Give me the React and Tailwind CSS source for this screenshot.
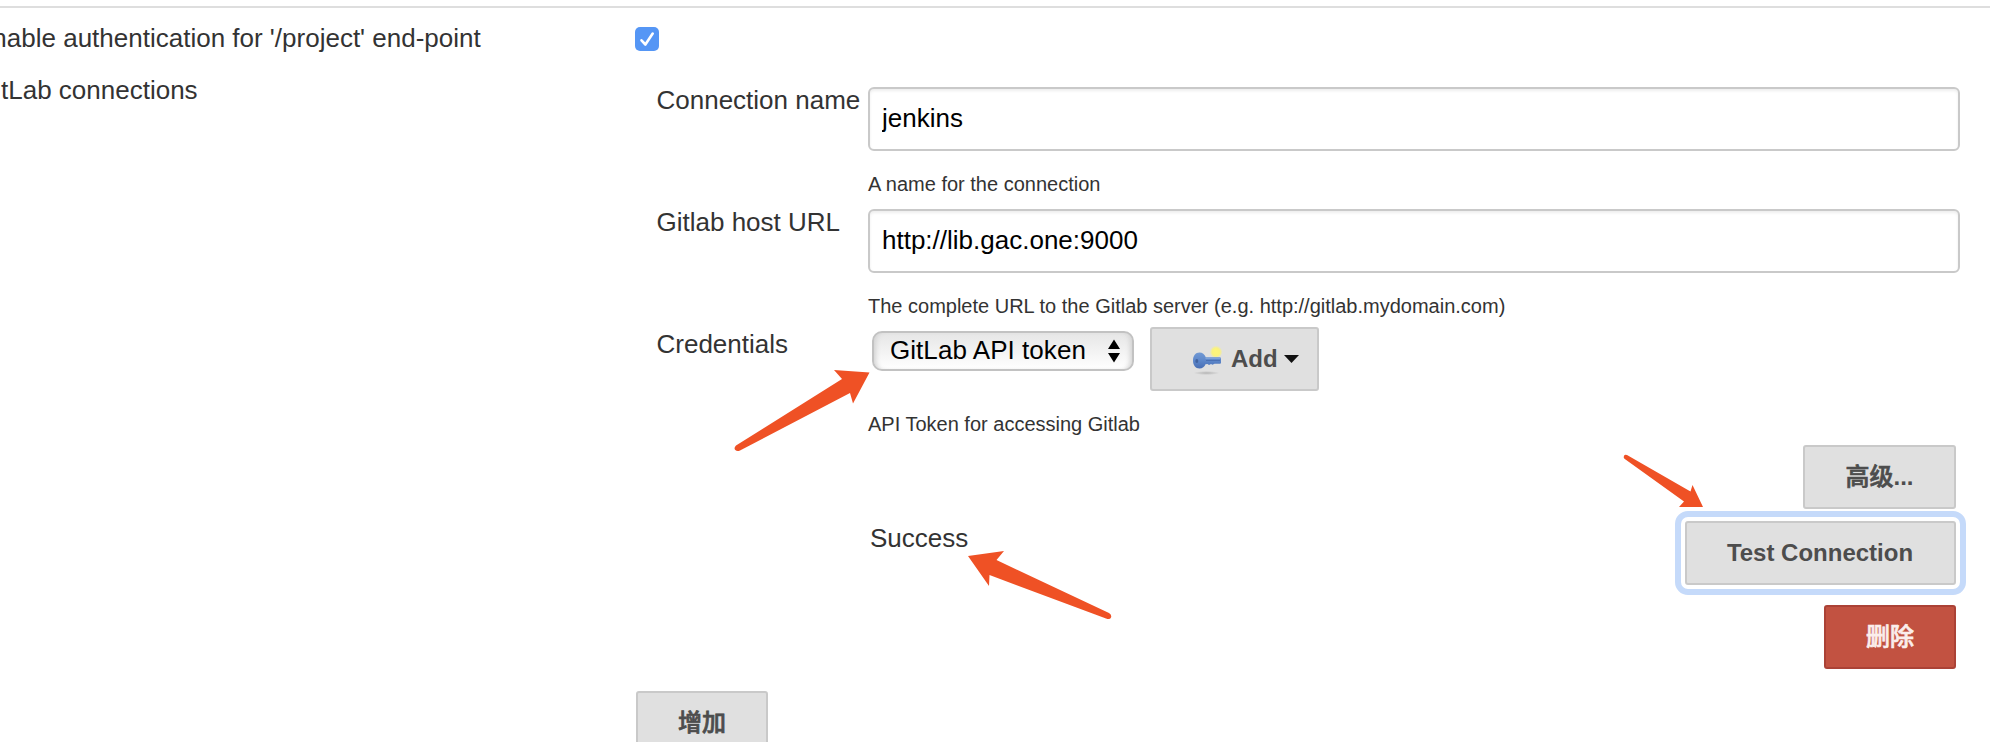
import React from 'react';

const buttonBase =
  'h-16 shrink-0 rounded-[3px] border-2 text-2xl leading-[28px] font-bold flex items-center';

function Button({ className = 'justify-center', children }) {
  return (
    <button type="button" className={`${buttonBase} border-[#c9c9c9] bg-[#e0e0e0] text-[#4d4d4d] ${className}`}>
      {children}
    </button>
  );
}

// Chinese button captions sit between the regular and bold weights.
function Caption({ children }) {
  return <span className="font-medium [-webkit-text-stroke:0.7px_currentColor]">{children}</span>;
}

function Field({ label, value, help }) {
  return (
    <div className="flex h-[122px]">
      <label className="w-[211.500px] shrink-0 whitespace-nowrap">{label}</label>
      <div className="w-[1092px] pt-[2px]">
        <input
          type="text"
          defaultValue={value}
          className="block h-16 w-full rounded-[6px] border-2 border-[#c9c9c9] bg-white px-3 pb-[2px] text-black shadow-[inset_0_2px_3px_rgba(0,0,0,0.07)] outline-none"
        />
        <p className="mt-[21px] text-[20px] leading-6">{help}</p>
      </div>
    </div>
  );
}

function KeyIcon() {
  return (
    <svg width="32" height="34" viewBox="0 0 32 34" className="shrink-0">
      <defs>
        <radialGradient id="glow">
          <stop offset="0" stopColor="#fdf57c" />
          <stop offset="0.6" stopColor="#fbf37c" />
          <stop offset="1" stopColor="#f7f08a" stopOpacity="0" />
        </radialGradient>
        <radialGradient id="shade">
          <stop offset="0" stopColor="#b4b4b4" />
          <stop offset="1" stopColor="#b4b4b4" stopOpacity="0" />
        </radialGradient>
        <linearGradient id="metal" x1="0" y1="0" x2="0" y2="1">
          <stop offset="0" stopColor="#7199d4" />
          <stop offset="0.5" stopColor="#5d87ca" />
          <stop offset="1" stopColor="#486eb4" />
        </linearGradient>
      </defs>
      <ellipse cx="15.500" cy="31" rx="13" ry="2" fill="url(#shade)" />
      <circle cx="25" cy="10" r="6.500" fill="url(#glow)" />
      <path
        d="M8.500 10.500C4.500 10.500 2 14 2 18.500S4.500 26.500 8.500 26.500c3 0 5-1.700 6-4.200l2-.3 1.500 1 2-1 1.500.7 2-.9h5c1 0 1.500-.6 1.500-1.400v-3.600c0-1-.5-1.500-1.400-1.500H14.800C13.500 12 11.500 10.500 8.500 10.500Z"
        fill="url(#metal)"
      />
      <ellipse cx="5.800" cy="19" rx="1.500" ry="2" fill="#41629f" />
      <path d="M15 18.500h14" stroke="#4a70b3" strokeWidth="1" />
      <path d="M14.500 16.200h15" stroke="#8badde" strokeWidth="1" />
    </svg>
  );
}

function Arrows() {
  return (
    <svg className="pointer-events-none absolute inset-0" width="1990" height="742" viewBox="0 0 1990 742" fill="#ef5125">
      <path d="M869.500 372.500 834 370 842 379 736 445.500Q733.500 448 735.300 450Q737 451.800 740 450.500L850 393 853 403.500Z" />
      <path d="M968 556 1004 551 996.500 560 1109 613Q1112 615 1111 617.500Q1110 620 1106 618.500L989.500 575 989 586Z" />
      <path d="M1703 507 1692.500 485 1690.500 491.500 1627 455Q1624.500 454 1624 456Q1623 458 1625.500 459.500L1684 501.500 1679 507Z" />
    </svg>
  );
}

export default function App() {
  return (
    <main className="relative h-[742px] w-[1990px] overflow-hidden bg-white font-['Liberation_Sans','Noto_Sans_CJK_SC',sans-serif] text-[26px] leading-[30px] text-[#333333]">
      <div className="mt-[6px] h-[2px] bg-[#dedede]" />

      <div className="flex h-[67px] pt-[15px]">
        <span className="-ml-[25px] w-[660px] whitespace-nowrap">Enable authentication for '/project' end-point</span>
        <span className="mt-1 flex size-6 items-center justify-center rounded-[5px] bg-[#5596f5]">
          <svg width="24" height="24" viewBox="0 0 24 24" fill="none" stroke="#fff" strokeWidth="2.600" strokeLinecap="round" strokeLinejoin="round">
            <path d="m6.500 13.300 3.900 4.200L17.700 6.500" />
          </svg>
        </span>
      </div>

      <div className="flex">
        <div className="-ml-[25px] w-[661px] shrink-0 whitespace-nowrap">GitLab connections</div>

        <section className="w-[1324px] pt-[10px]">
          <div className="pl-[20.500px]">
            <Field label="Connection name" value="jenkins" help="A name for the connection" />
            <Field label="Gitlab host URL" value="http://lib.gac.one:9000" help="The complete URL to the Gitlab server (e.g. http://gitlab.mydomain.com)" />

            <div className="flex h-[116px]">
              <div className="w-[211.500px] shrink-0">Credentials</div>
              <div className="-mt-[2px]">
                <div className="flex items-start">
                  <div className="mt-1 ml-1 flex h-10 w-[262px] items-center justify-between rounded-[10px] border-2 border-[#c2c2c2] bg-linear-to-b from-[#e6e6e6] to-white pr-3 pl-4 text-black shadow-[inset_5px_0_5px_-3px_#d2d2d2,inset_-5px_0_5px_-3px_#d2d2d2]">
                    <span className="-mt-[2px] tracking-[0.05px]">GitLab API token</span>
                    <svg width="12" height="24" viewBox="0 0 12 24" fill="#000">
                      <path d="M6 .500 12 10H0ZM0 14h12L6 23.500Z" />
                    </svg>
                  </div>
                  <Button className="ml-4 w-[169px] pl-[39px]">
                    <KeyIcon />
                    <span className="ml-2">Add</span>
                    <svg width="15" height="8" viewBox="0 0 15 8" className="ml-[6px]" fill="#111">
                      <path d="M0 0h15L7.500 8Z" />
                    </svg>
                  </Button>
                </div>
                <p className="mt-[21px] text-[20px] leading-6">API Token for accessing Gitlab</p>
              </div>
            </div>
          </div>

          <div className="flex flex-col items-end pr-1">
            <Button className="w-[153px] justify-center">
              <Caption>高级</Caption>...
            </Button>
            <div className="mt-3 flex w-full items-start justify-between pl-[234px]">
              <span className="mt-[2px]">Success</span>
              <Button className="w-[271px] justify-center pr-[1px] outline-6 outline-offset-4 outline-[#c5dafa]">Test Connection</Button>
            </div>
            <button type="button" className={`${buttonBase} mt-5 w-[132px] justify-center border-[#ab4236] bg-[#c25241] text-[#fbeeec]`}>
              <Caption>删除</Caption>
            </button>
          </div>
          <Button className="mt-[22px] w-[132px] justify-center">
            <Caption>增加</Caption>
          </Button>
        </section>
      </div>
      <Arrows />
    </main>
  );
}
